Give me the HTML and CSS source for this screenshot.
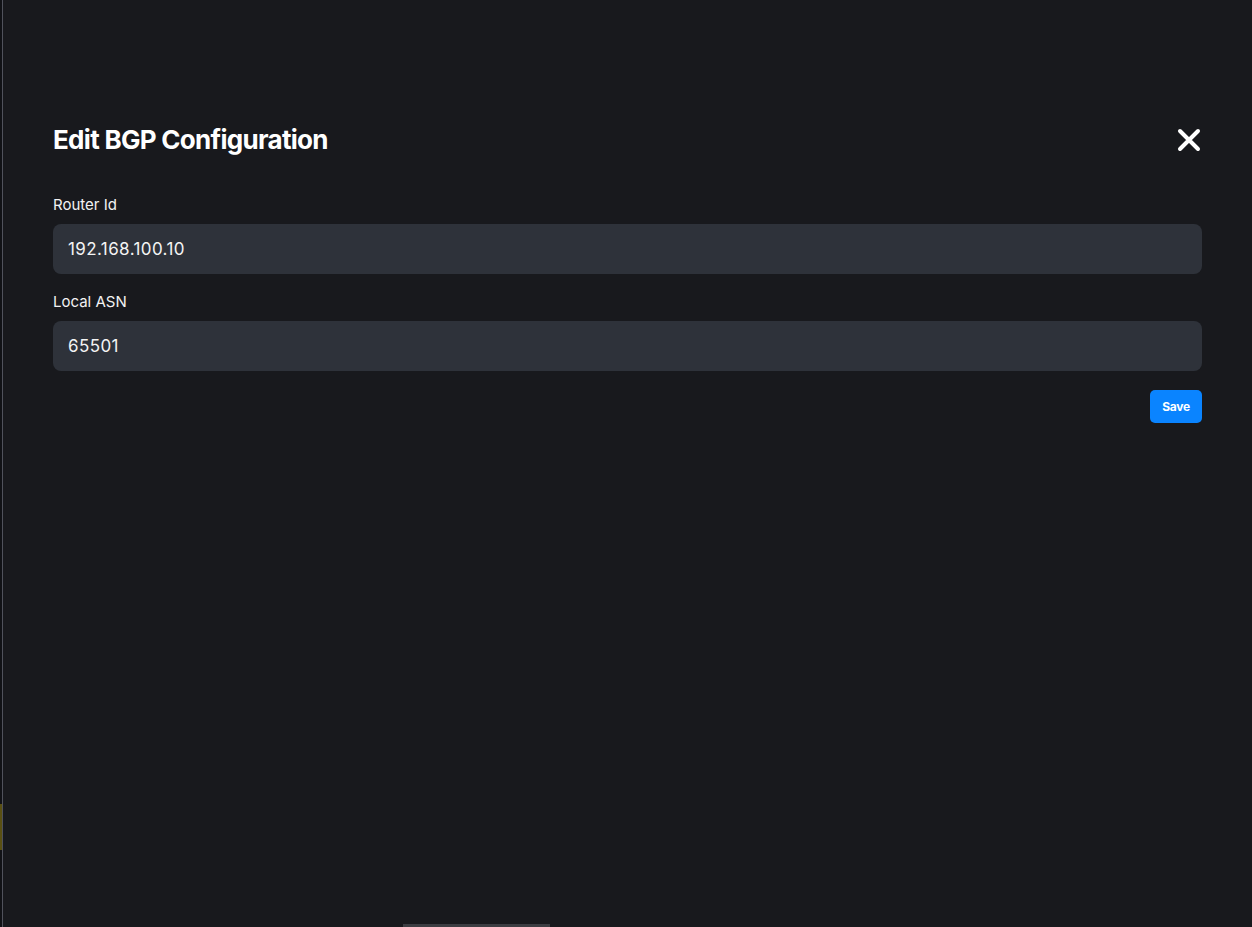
FILE: index.html
```html
<!DOCTYPE html>
<html>
<head>
<meta charset="utf-8">
<link rel="stylesheet" href="styles.css">
</head>
<body>
<div class="page">
  <div class="rail"><div class="rail-mark"></div></div>
  <main class="modal">
    <header class="modal-head">
      <h1 class="title">Edit BGP Configuration</h1>
      <button class="close" aria-label="Close">
        <svg width="24" height="24" viewBox="0 0 24 24"><path d="M3 3 L21 21 M21 3 L3 21" stroke="#fff" stroke-width="4" stroke-linecap="round"/></svg>
      </button>
    </header>
    <div class="field">
      <label class="label">Router Id</label>
      <div class="input">192.168.100.10</div>
    </div>
    <div class="field">
      <label class="label">Local ASN</label>
      <div class="input">65501</div>
    </div>
    <div class="actions"><button class="save">Save</button></div>
  </main>
  <div class="scrollthumb"></div>
</div>
</body>
</html>
```
FILE: styles.css
```css
html, body { margin: 0; height: 100%; }
body { background: #18191d; font-family: Inter, "Noto Sans", sans-serif; color: #fff; overflow: hidden; }
.page { display: flex; height: 927px; position: relative; }
.rail { width: 2px; background: #111216; border-right: 1px solid #50525c; position: relative; flex: none; }
.rail-mark { position: absolute; left: 0; top: 804px; width: 2px; height: 46px; background: #5a5012; }
.modal { flex: 1; padding: 124px 50px 0 50px; }
.modal-head { display: flex; justify-content: space-between; align-items: center; margin-bottom: 40px; }
.title { margin: 0; font-size: 26px; font-weight: 700; letter-spacing: -0.7px; line-height: 32px; }
.close { background: none; border: 0; padding: 0; width: 24px; height: 24px; cursor: pointer; display: block; margin-right: 1px; }
.close svg { display: block; }
.field { margin-bottom: 19px; }
.label { display: block; font-size: 15px; line-height: 18px; margin-bottom: 10px; color: #f2f2f2; }
.input { background: #2e323a; border-radius: 8px; height: 50px; display: flex; align-items: center; padding: 0 15px; font-size: 17px; letter-spacing: 0.4px; color: #f4f4f4; }
.actions { display: flex; justify-content: flex-end; margin-top: 1px; }
.save { background: #0a84ff; color: #fff; border: 0; border-radius: 5px; font-family: Inter, sans-serif; font-weight: 700; font-size: 12px; height: 33px; width: 52px; padding: 0; letter-spacing: -0.3px; }
.scrollthumb { position: absolute; left: 403px; bottom: 0; width: 147px; height: 3px; background: #3c3d42; }
```
